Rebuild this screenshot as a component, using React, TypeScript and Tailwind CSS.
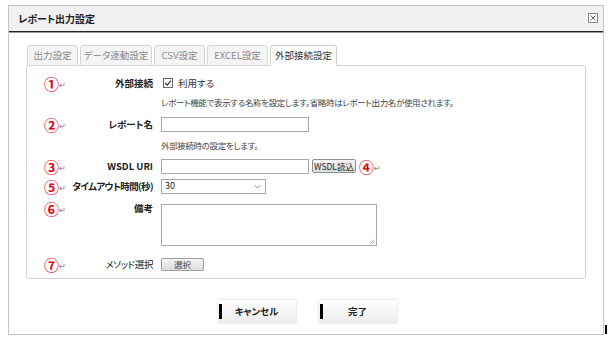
import React from "react";

const Num = ({ n }: { n: string }) => (
  <span className="flex items-center w-[19px] shrink-0">
    <span className="w-[13px] flex justify-center text-[#e60012] text-[15px] leading-none font-bold">{n}</span>
    <span className="text-[#777] text-[8px] leading-none mt-[3px] ml-[1px]">↵</span>
  </span>
);

const Label = ({ children, className = "" }: { children: React.ReactNode; className?: string }) => (
  <span className={"w-[89px] shrink-0 text-right font-bold text-[9.5px] text-[#222] " + className}>{children}</span>
);

export default function App() {
  return (
    <div className="w-[608px] h-[337px] bg-white relative font-['Noto_Sans_CJK_JP',sans-serif] [font-feature-settings:'palt'] text-[#333] overflow-hidden">
      <div className="ml-[8px] mt-[5px] w-[596px] h-[330px] border border-[#c4c4c4] flex flex-col">
        {/* title bar */}
        <div className="h-[26px] bg-[#f1f1f1] border-b border-[#222] shadow-[0_1px_0_#9a9a9a] flex items-center justify-between pl-[9px] pr-[5px] shrink-0">
          <span className="text-[10px] font-bold text-[#222]">レポート出力設定</span>
          <svg width="10" height="10" viewBox="0 0 10 10" className="mt-[-2px]">
            <rect x="0.5" y="0.5" width="9" height="9" fill="#fff" stroke="#888" />
            <path d="M2.5 2.5 L7.5 7.5 M7.5 2.5 L2.5 7.5" stroke="#666" strokeWidth="1" />
          </svg>
        </div>
        {/* body */}
        <div className="px-[17px] pt-[13px] flex flex-col">
          {/* tabs */}
          <div className="flex gap-[2px] pl-[1px] h-[21px] -mb-px relative z-10">
            {[
              ["出力設定", "w-[51px]"],
              ["データ連動設定", "w-[72px]"],
              ["CSV設定", "w-[51px]"],
              ["EXCEL設定", "w-[61px]"],
            ].map(([t, w]) => (
              <div
                key={t}
                className={
                  w +
                  " h-[21px] border border-[#d6d6d6] border-b-[#d6d6d6] rounded-t-[3px] bg-[#f4f4f4] text-[#888] text-[9.5px] flex items-center justify-center"
                }
              >
                {t}
              </div>
            ))}
            <div className="w-[67px] h-[21px] border border-[#cfcfcf] border-b-white rounded-t-[3px] bg-white text-[#333] text-[9.5px] flex items-center justify-center">
              外部接続設定
            </div>
          </div>
          {/* panel */}
          <div className="h-[214px] border border-[#d3d3d3] rounded-[3px] pl-[18px] pt-[8px] flex flex-col">
            <div className="flex items-center h-[18px]">
              <Num n="①" />
              <Label>外部接続</Label>
              <span className="ml-[10px] flex items-center gap-[5px] text-[9.5px] text-[#333]">
                <svg width="10" height="10" viewBox="0 0 10 10">
                  <rect x="0.5" y="0.5" width="9" height="9" fill="#fff" stroke="#666" />
                  <path d="M2 5 L4.2 7.2 L8 2.6" stroke="#333" strokeWidth="1.1" fill="none" />
                </svg>
                利用する
              </span>
            </div>
            <div className="flex items-center h-[18px] mt-[1px] pl-[116px] text-[8.5px] tracking-[-0.35px] text-[#444]">
              レポート機能で表示する名称を設定します。省略時はレポート出力名が使用されます。
            </div>
            <div className="flex items-center h-[16px] mt-[5px]">
              <Num n="②" />
              <Label>レポート名</Label>
              <div className="ml-[8px] w-[148px] h-[15px] border border-[#a8a8a8] bg-white" />
            </div>
            <div className="flex items-center h-[16px] mt-[5px] pl-[116px] text-[8.5px] tracking-[-0.35px] text-[#444]">
              外部接続時の設定をします。
            </div>
            <div className="flex items-center h-[16px] mt-[5px]">
              <Num n="③" />
              <Label>WSDL URI</Label>
              <div className="ml-[8px] w-[148px] h-[15px] border border-[#a8a8a8] bg-white" />
              <button className="ml-[3px] w-[44px] h-[14px] border border-[#8e8e8e] rounded-[2px] bg-gradient-to-b from-[#f6f6f6] to-[#dcdcdc] text-[8.5px] text-[#222] leading-none flex items-center justify-center">
                WSDL読込
              </button>
              <span className="ml-[4px]">
                <Num n="④" />
              </span>
            </div>
            <div className="flex items-center h-[16px] mt-[4px]">
              <Num n="⑤" />
              <Label className="tracking-[-0.6px]">タイムアウト時間(秒)</Label>
              <div className="ml-[8px] w-[105px] h-[15px] border border-[#a8a8a8] bg-white flex items-center justify-between pl-[3px] pr-[4px] text-[9px] text-[#222]">
                <span>30</span>
                <svg width="7" height="5" viewBox="0 0 7 5">
                  <path d="M0.5 1 L3.5 4 L6.5 1" stroke="#999" strokeWidth="1" fill="none" />
                </svg>
              </div>
            </div>
            <div className="flex items-start mt-[7px]">
              <span className="flex items-center h-[14px]">
                <Num n="⑥" />
                <Label>備考</Label>
              </span>
              <div className="ml-[8px] mt-[3px] w-[216px] h-[42px] border border-[#a8a8a8] bg-white flex items-end justify-end p-[1px]">
                <svg width="5" height="5" viewBox="0 0 5 5">
                  <path d="M4.5 0.5 L0.5 4.5 M4.5 2.5 L2.5 4.5" stroke="#aaa" strokeWidth="0.8" />
                </svg>
              </div>
            </div>
            <div className="flex items-center h-[16px] mt-[10px]">
              <Num n="⑦" />
              <Label className="font-normal tracking-[-0.4px]">メソッド選択</Label>
              <button className="ml-[8px] w-[43px] h-[13px] border border-[#a0a0a0] rounded-[1px] bg-gradient-to-b from-[#f3f3f3] to-[#dedede] text-[8.5px] text-[#444] leading-none flex items-center justify-center">
                選択
              </button>
            </div>
          </div>
          {/* buttons */}
          <div className="flex justify-center gap-[23px] mt-[21px] pl-[2px]">
            {["キャンセル", "完了"].map((t) => (
              <button
                key={t}
                className="w-[78px] h-[23px] rounded-[2px] bg-gradient-to-b from-[#ffffff] to-[#ececec] shadow-[0_0_2px_rgba(0,0,0,0.25)] flex items-center"
              >
                <span className="ml-[1px] w-[3px] h-[15px] bg-black shrink-0" />
                <span className="flex-1 text-center text-[9.5px] font-bold text-[#222] pr-[4px]">{t}</span>
              </button>
            ))}
          </div>
        </div>
      </div>
      <div className="absolute left-[605px] top-[325px] w-[2px] h-[9px] bg-black" />
    </div>
  );
}
